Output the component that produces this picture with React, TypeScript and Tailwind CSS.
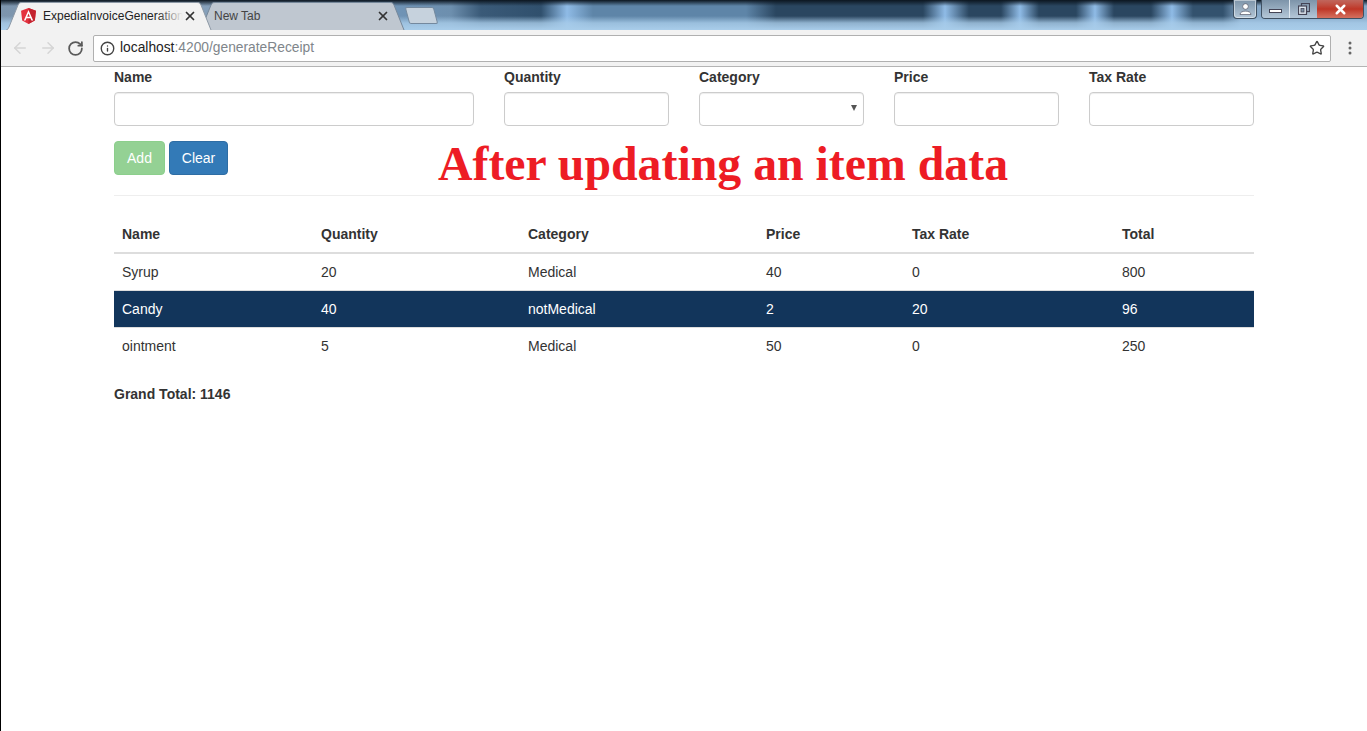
import React from 'react';
import { ArrowLeft, ArrowRight, RotateCw, Info, Star, X } from 'lucide-react';

const columns = ['Name', 'Quantity', 'Category', 'Price', 'Tax Rate', 'Total'];
const widths = ['w-[199px]', 'w-[207px]', 'w-[238px]', 'w-[146px]', 'w-[210px]', 'w-[140px]'];

const rows = [
  { name: 'Syrup', quantity: 20, category: 'Medical', price: 40, tax: 0, total: 800 },
  { name: 'Candy', quantity: 40, category: 'notMedical', price: 2, tax: 20, total: 96, selected: true },
  { name: 'ointment', quantity: 5, category: 'Medical', price: 50, tax: 0, total: 250 },
];

const AngularLogo = () => (
  <svg width="15" height="16" viewBox="13 5 224 240" className="shrink-0">
    <polygon fill="#e4323f" points="125,5 13,45 30,193 125,245 220,193 237,45" />
    <polygon fill="#c4232f" points="125,5 125,245 220,193 237,45" />
    <path fill="#FFFFFF" d="M125,36 L55,193 H81 L95,158 H155 L169,193 H195 L125,36 Z M145,136 H105 L125,88 Z" />
  </svg>
);

const Tab = ({ title, active }: { title: string; active?: boolean }) => (
  <div className={`relative flex h-[28px] w-[193px] shrink-0 items-center pl-[15px] ${active ? 'z-10' : ''}`}>
    <svg className="absolute left-0 top-0" width="206" height="28" viewBox="0 0 206 28">
      <path
        d="M0 28 C1.5 28 2 27 3 25 L12 3 C13 1 14 0.5 16 0.5 H191 C193 0.5 194 1 195 3 L205 28"
        fill={active ? '#f2f2f2' : '#bfc7d0'}
        stroke={active ? '#8d99a6' : '#76889a'}
      />
    </svg>
    {active && (
      <span className="relative mr-[7px] -mt-[1px]">
        <AngularLogo />
      </span>
    )}
    <div className={`relative overflow-hidden whitespace-nowrap text-[12px] ${active ? 'w-[140px] text-[#222]' : 'w-[162px] text-[#444]'}`}>
      {title}
      {active && <span className="absolute right-0 top-0 h-full w-[26px] bg-gradient-to-r from-transparent to-[#f2f2f2]" />}
    </div>
    <X size={14} strokeWidth={3} className="relative shrink-0 text-[#333]" />
  </div>
);

const Field = ({ label, width, select }: { label: string; width: string; select?: boolean }) => (
  <div className={`${width} flex flex-col`}>
    <label className="text-[14px] leading-[20px] font-bold text-[#333] mb-[5px]">{label}</label>
    <div className="relative h-[34px] rounded border border-[#ccc] bg-white shadow-[inset_0_1px_1px_rgba(0,0,0,0.075)]">
      {select && <span className="absolute right-[6px] top-[12px] border-x-[3.5px] border-t-[6px] border-x-transparent border-t-[#555]" />}
    </div>
  </div>
);

export default function App() {
  return (
    <div className="w-full h-[731px] overflow-hidden bg-white border-l border-black font-['Liberation_Sans',Arial,sans-serif] text-[14px] text-[#333]">
      {/* window frame */}
      <div className="relative flex h-[30px] bg-[linear-gradient(90deg,#7d95ad_0px,#86a0ba_200px,#6f93b5_400px,#6d8fae_450px,#3a5a78_480px,#30506d_540px,#8fbbe6_566px,#5e85a8_592px,#5e85a8_745px,#2a4660_775px,#2a4660_922px,#8fbbe6_944px,#2a4660_968px,#2a4660_1000px,#8fbbe6_1019px,#2a4660_1038px,#2a4660_1075px,#8fbbe6_1094px,#2a4660_1113px,#2a4660_1150px,#8fbbe6_1171px,#33526e_1192px,#33526e_1222px,#86a8c8_1240px,#86a8c8_1367px)]">
        <div className="absolute inset-x-0 bottom-0 h-[14px] bg-gradient-to-b from-transparent via-[#a9cdea]/80 to-[#a9cdea]" />
        <div className="absolute inset-x-0 top-0 h-[6px] bg-gradient-to-b from-[#0c1620] to-transparent" />
        <div className="relative flex items-end pl-[5px]">
          <Tab title="ExpediaInvoiceGeneration" active />
          <Tab title="New Tab" />
          <div className="ml-[15px] mb-[6px] h-[17px] w-[29px] skew-x-[15deg] rounded-[2px] border border-[#74899e] bg-[#c6d2dd]" />
        </div>
        <div className="relative ml-auto mr-[3px] flex items-start gap-[4px]">
          <div className="flex h-[19px] w-[24px] items-center justify-center rounded-b-[4px] border border-t-0 border-[#3f5163] bg-gradient-to-b from-[#7d94a9] to-[#b4c7d8] shadow-[inset_0_0_0_1px_rgba(255,255,255,0.45)]">
            <svg width="13" height="12" viewBox="0 0 13 12"><circle cx="6.5" cy="3.5" r="2.8" fill="#fff" stroke="#445" strokeWidth="0.6" /><path d="M1 11.5 C1 7 12 7 12 11.5 Z" fill="#fff" stroke="#445" strokeWidth="0.6" /></svg>
          </div>
          <div className="flex h-[19px] overflow-hidden rounded-b-[4px] border border-t-0 border-[#3f5163]">
            <div className="flex w-[28px] items-center justify-center border-r border-[#dfe8f0] bg-gradient-to-b from-[#7d94a9] to-[#b4c7d8]">
              <div className="mt-[4px] h-[4px] w-[13px] border border-[#445] bg-white" />
            </div>
            <div className="flex w-[27px] items-center justify-center bg-gradient-to-b from-[#7d94a9] to-[#b4c7d8]">
              <svg width="12" height="12" viewBox="0 0 12 12" fill="none" stroke="#445" strokeWidth="1.2"><rect x="3.5" y="0.5" width="8" height="8" /><rect x="0.5" y="3" width="8" height="8.5" fill="#dde6ee" /><rect x="3" y="5.5" width="3" height="3.5" fill="#7d94a9" strokeWidth="0.8" /></svg>
            </div>
            <div className="flex w-[46px] items-center justify-center bg-gradient-to-b from-[#c0665c] via-[#bf3526] to-[#d4705f]">
              <X size={15} strokeWidth={4} className="text-white" />
            </div>
          </div>
        </div>
      </div>

      {/* toolbar */}
      <div className="h-[37px] flex items-center bg-[#f2f2f2] border-b border-[#b4b4b4]">
        <ArrowLeft size={18} strokeWidth={2} className="ml-[10px] text-[#d5d5d5]" />
        <ArrowRight size={18} strokeWidth={2} className="ml-[10px] text-[#d5d5d5]" />
        <RotateCw size={17} strokeWidth={2.5} className="ml-[10px] text-[#5a5a5a]" />
        <div className="ml-[9px] flex h-[27px] w-[1238px] items-center rounded-[2px] border border-[#b0b0b0] bg-white pl-[6px] pr-[5px]">
          <Info size={15} strokeWidth={2.2} className="text-[#444]" />
          <span className="ml-[5px] mt-[1px] text-[13.8px] text-[#222]">
            localhost<span className="text-[#80868b]">:4200/generateReceipt</span>
          </span>
          <Star size={16} strokeWidth={2} className="ml-auto text-[#444]" />
        </div>
        <svg className="ml-[17px]" width="4" height="14" viewBox="0 0 4 14"><circle cx="2" cy="2" r="1.5" fill="#666" /><circle cx="2" cy="7" r="1.5" fill="#666" /><circle cx="2" cy="12" r="1.5" fill="#666" /></svg>
      </div>

      {/* page */}
      <div className="w-[1140px] ml-[113px]">
        <div className="flex gap-[30px]">
          <Field label="Name" width="w-[360px]" />
          <Field label="Quantity" width="w-[165px]" />
          <Field label="Category" width="w-[165px]" select />
          <Field label="Price" width="w-[165px]" />
          <Field label="Tax Rate" width="w-[165px]" />
        </div>

        <div className="flex h-[34px] mt-[15px] items-center">
          <button className="h-[34px] w-[51px] rounded border border-[#8ccf8c] bg-[#94d194] text-white">Add</button>
          <button className="h-[34px] w-[59px] ml-[4px] rounded border border-[#2e6da4] bg-[#337ab7] text-white">Clear</button>
          <h1 className="ml-[210px] pt-[12px] whitespace-nowrap font-['Liberation_Serif',serif] text-[47.8px] leading-[48px] font-bold text-[#ed1c24]">
            After updating an item data
          </h1>
        </div>

        <hr className="mt-[20px] border-t border-[#eee]" />

        <table className="mt-[20px] w-full table-fixed border-separate border-spacing-0">
          <thead>
            <tr>
              {columns.map((c, i) => (
                <th key={c} className={`${widths[i]} h-[38px] border-b-2 border-[#ddd] px-[8px] text-left font-bold`}>{c}</th>
              ))}
            </tr>
          </thead>
          <tbody>
            {rows.map((r, i) => {
              const cell = `px-[8px] ${i > 0 ? 'h-[37px] border-t border-[#ddd]' : 'h-[36px]'}`;
              return (
                <tr key={r.name} className={r.selected ? 'bg-[#12355b] text-white' : ''}>
                  <td className={cell}>{r.name}</td>
                  <td className={cell}>{r.quantity}</td>
                  <td className={cell}>{r.category}</td>
                  <td className={cell}>{r.price}</td>
                  <td className={cell}>{r.tax}</td>
                  <td className={cell}>{r.total}</td>
                </tr>
              );
            })}
          </tbody>
        </table>

        <p className="mt-[20px] font-bold">Grand Total: 1146</p>
      </div>
    </div>
  );
}
